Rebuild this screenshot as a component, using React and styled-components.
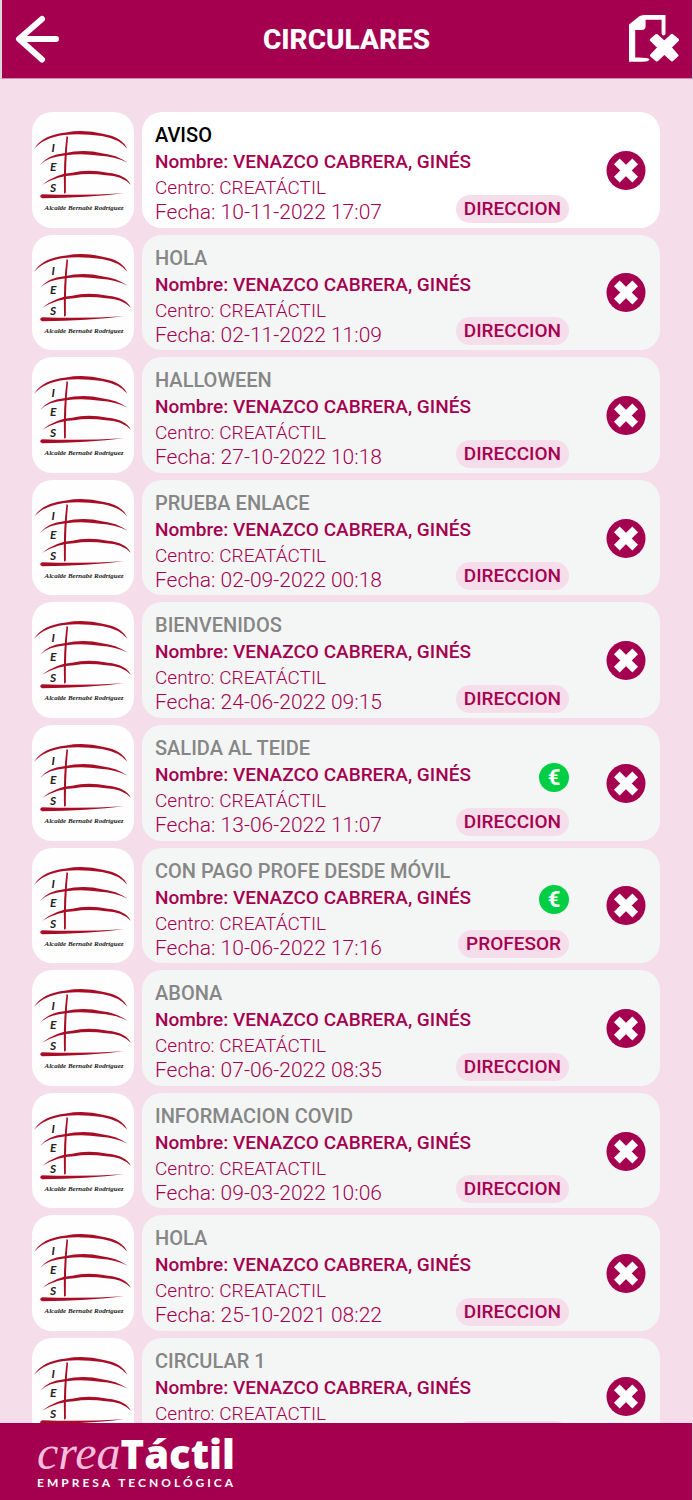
import React, { useState } from "react";
import styled, { createGlobalStyle } from "styled-components";

const BRAND = "#a50050";
const BLUSH = "#f5ddea";

const GlobalStyle = createGlobalStyle`
  * { box-sizing: border-box; }
  body {
    margin: 0;
    background: ${BLUSH};
    font-family: Roboto, "Liberation Sans", sans-serif;
    color: ${BRAND};
  }
`;

const Page = styled.div`
  height: 100vh;
  display: flex;
  flex-direction: column;
  overflow: hidden;
`;

const Header = styled.header`
  flex: none;
  height: 79px;
  display: grid;
  grid-template-columns: 60px 1fr 60px;
  align-items: center;
  padding: 0 13px 0 12px;
  background: ${BRAND};
  border-left: 2px solid #dcd8da;
  border-right: 1px solid #dcd8da;
  border-bottom: 1px solid #cf8fae;
`;

const HeaderTitle = styled.h1`
  margin: 0;
  padding-top: 2px;
  font-size: 28px;
  line-height: 36px;
  font-weight: 800;
  color: #fff;
  text-align: center;
`;

const IconButton = styled.button`
  display: flex;
  justify-self: ${(p) => p.$side};
  padding: 0;
  border: 0;
  background: none;
  cursor: pointer;
`;

const Main = styled.main`
  flex: 1;
  min-height: 0;
  overflow-y: auto;
  scrollbar-width: none;
`;

const List = styled.ul`
  margin: 0;
  padding: 33px 33px 33px 32px;
  list-style: none;
  display: flex;
  flex-direction: column;
  gap: 7px;
`;

const Row = styled.li`
  display: grid;
  grid-template-columns: 102px minmax(0, 1fr);
  gap: 8px;
`;

const Thumb = styled.div`
  aspect-ratio: 15 / 17;
  border-radius: 20px;
  overflow: hidden;
  background: #fdfefd;

  svg { display: block; width: 100%; height: 100%; }
`;

const Card = styled.article`
  display: flex;
  padding: 0 14px 0 13px;
  border-radius: 20px;
  background: ${(p) => (p.$unread ? "#fff" : "#f4f6f5")};
`;

const Details = styled.div`
  flex: 1;
  min-width: 0;
  padding-top: 10px;
  white-space: nowrap;
`;

const Title = styled.h2`
  margin: 0;
  font-size: 20px;
  line-height: 27px;
  font-weight: 500;
  color: ${(p) => (p.$unread ? "#000" : "#868686")};
`;

const Line = styled.p`
  margin: 0;
  font-size: 19px;
  line-height: ${(p) => (p.$strong ? 26 : 25)}px;
  font-weight: ${(p) => (p.$strong ? 500 : 300)};
`;

const DateLine = styled(Line)`
  font-size: 21px;
`;

const Tags = styled.div`
  display: flex;
  flex-direction: column;
  justify-content: flex-end;
  align-items: flex-end;
  gap: 16px;
  padding-bottom: 5px;
`;

const Badge = styled.span`
  padding: 0 8px;
  border-radius: 14px;
  background: ${BLUSH};
  font-size: 19px;
  line-height: 28px;
  font-weight: 500;
`;

const Euro = styled.span`
  width: 30px;
  height: 29px;
  border-radius: 50%;
  background: #00cf45;
  color: #fff;
  font-size: 22px;
  line-height: 29px;
  font-weight: 700;
  text-align: center;
`;

const DeleteButton = styled.button`
  align-self: center;
  display: flex;
  margin-left: 37px;
  padding: 0;
  border: 0;
  background: none;
  cursor: pointer;
`;

const Footer = styled.footer`
  flex: none;
  height: 77px;
  padding: 8px 37px;
  background: ${BRAND};
  border-right: 1px solid #dcd8da;
`;

const Brand = styled.div`
  display: flex;
  align-items: baseline;
  line-height: 44px;
  color: #fff;
`;

const BrandLight = styled.span`
  font-family: "Liberation Serif", serif;
  font-style: italic;
  font-size: 48px;
  color: #f7bfdc;
`;

const BrandBold = styled.span`
  font-family: "Open Sans", sans-serif;
  font-weight: 800;
  font-size: 40px;
`;

const Tagline = styled.div`
  font-family: Lato, sans-serif;
  font-weight: 700;
  font-size: 12px;
  line-height: 14px;
  letter-spacing: 3px;
  color: #fff;
`;

const BackIcon = () => (
  <svg width="46" height="50" viewBox="0 0 46 50" fill="none" stroke="#fff" strokeWidth="6" strokeLinecap="round" strokeLinejoin="round" aria-hidden="true">
    <path d="M28 5 5 25 28 45.500M6 25H42" />
  </svg>
);

const RemoveDocIcon = () => (
  <svg width="50" height="48" viewBox="0 0 50 48" aria-hidden="true">
    <path fill="#fff" d="M0 9.500 10 1.500Q12 0 15 0H36.500V17.500Q36.500 20.500 34.500 20.500T32.600 17.500V4.700H16.600V11Q16.600 15 12.500 15H6.200V42.600Q19 42.200 20.600 44.500 19 46.700 14 46.800H0Z" />
    <path fill="#fff" stroke="#fff" strokeWidth="3" strokeLinejoin="round" d="M27.500 20.500 35.300 27.300 43 20.300 48.500 25 41 32.500 48 40.500 43 45 35.300 38 28 45 22.500 40.500 30 32.500 22.300 25Z" />
  </svg>
);

const CloseIcon = () => (
  <svg width="40" height="40" viewBox="0 0 40 40" aria-hidden="true">
    <circle cx="20" cy="20.500" r="19.500" fill={BRAND} />
    <path stroke="#fff" strokeWidth="8" d="M10.800 11.300 29.200 29.700M29.200 11.300 10.800 29.700" />
  </svg>
);

const SchoolLogo = () => (
  <svg viewBox="0 0 102 116" role="img" aria-label="IES Alcalde Bernabé Rodríguez">
    <g fill="#a80d25">
      <path d="M2 37Q10 23 34 20.500Q52 17 72 22Q90 25 95.500 37Q88 27 70 24Q50 21.500 32 23Q11 26 2 37Z" />
      <path d="M8 53Q16 43 32 41.500Q52 37 70 41.500Q84 43 96 51Q84 45 68 44Q50 41 34 43.500Q16 45 8 53Z" />
      <path d="M10 73Q24 62 40 61Q56 57 76 61Q94 63 99 73Q90 64 74 63.500Q56 61 42 63.500Q26 64 10 73Z" />
      <path d="M34.500 24 36 25Q33.500 50 33.800 81L32 82Q31 50 34.500 24Z" />
      <path d="M10 82.500Q50 84 92 81.500Q56 86 10 86.500Q6 84.500 10 82.500Z" />
    </g>
    <g fill="#222" fontFamily="Lato, sans-serif" fontStyle="italic" fontSize="12" fontWeight="700" textAnchor="middle">
      <text x="21" y="40">I</text>
      <text x="21" y="59">E</text>
      <text x="21" y="80">S</text>
    </g>
    <text x="52" y="98" fill="#222" fontFamily="Liberation Serif, serif" fontStyle="italic" fontWeight="700" fontSize="7" textAnchor="middle">
      Alcalde Bernabé Rodríguez
    </text>
  </svg>
);

const NAME = "VENAZCO CABRERA, GINÉS";

const INITIAL = [
  { title: "AVISO", school: "CREATÁCTIL", date: "10-11-2022 17:07", from: "DIRECCION", unread: true },
  { title: "HOLA", school: "CREATÁCTIL", date: "02-11-2022 11:09", from: "DIRECCION" },
  { title: "HALLOWEEN", school: "CREATÁCTIL", date: "27-10-2022 10:18", from: "DIRECCION" },
  { title: "PRUEBA ENLACE", school: "CREATÁCTIL", date: "02-09-2022 00:18", from: "DIRECCION" },
  { title: "BIENVENIDOS", school: "CREATÁCTIL", date: "24-06-2022 09:15", from: "DIRECCION" },
  { title: "SALIDA AL TEIDE", school: "CREATÁCTIL", date: "13-06-2022 11:07", from: "DIRECCION", payment: true },
  { title: "CON PAGO PROFE DESDE MÓVIL", school: "CREATÁCTIL", date: "10-06-2022 17:16", from: "PROFESOR", payment: true },
  { title: "ABONA", school: "CREATÁCTIL", date: "07-06-2022 08:35", from: "DIRECCION" },
  { title: "INFORMACION COVID", school: "CREATACTIL", date: "09-03-2022 10:06", from: "DIRECCION" },
  { title: "HOLA", school: "CREATACTIL", date: "25-10-2021 08:22", from: "DIRECCION" },
  { title: "CIRCULAR 1", school: "CREATACTIL", date: "25-10-2021 08:20", from: "DIRECCION" },
];

export default function App() {
  const [items, setItems] = useState(INITIAL);

  return (
    <Page>
      <GlobalStyle />
      <Header>
        <IconButton $side="start" aria-label="Volver"><BackIcon /></IconButton>
        <HeaderTitle>CIRCULARES</HeaderTitle>
        <IconButton $side="end" aria-label="Borrar circulares" onClick={() => setItems([])}><RemoveDocIcon /></IconButton>
      </Header>
      <Main>
        <List>
          {items.map((item) => (
            <Row key={item.date}>
              <Thumb><SchoolLogo /></Thumb>
              <Card $unread={item.unread}>
                <Details>
                  <Title $unread={item.unread}>{item.title}</Title>
                  <Line $strong>Nombre: {NAME}</Line>
                  <Line>Centro: {item.school}</Line>
                  <DateLine>Fecha: {item.date}</DateLine>
                </Details>
                <Tags>
                  {item.payment && <Euro>€</Euro>}
                  <Badge>{item.from}</Badge>
                </Tags>
                <DeleteButton aria-label={`Borrar ${item.title}`} onClick={() => setItems(items.filter((i) => i !== item))}>
                  <CloseIcon />
                </DeleteButton>
              </Card>
            </Row>
          ))}
        </List>
      </Main>
      <Footer>
        <Brand>
          <BrandLight>crea</BrandLight>
          <BrandBold>Táctil</BrandBold>
        </Brand>
        <Tagline>EMPRESA TECNOLÓGICA</Tagline>
      </Footer>
    </Page>
  );
}
